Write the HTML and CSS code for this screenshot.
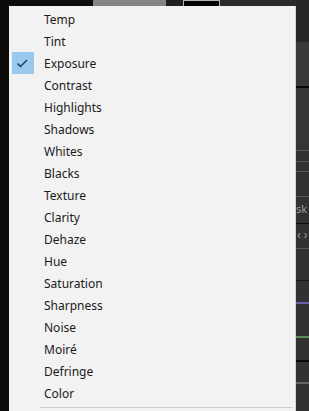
FILE: index.html
```html
<!DOCTYPE html>
<html>
  <head>
    <title>Adjustment menu</title>
    <link rel="stylesheet" href="styles.css">
  </head>
  <body>
    <div class="topbar">
      <div class="seg seg-dark"></div>
      <div class="seg seg-gray"></div>
      <div class="seg seg-mid"></div>
      <div class="seg seg-box"></div>
      <div class="seg seg-rest"></div>
    </div>
    <div class="main">
      <div class="left-strip"></div>
      <div class="menu">
        <ul class="items">
          <li class="item">Temp</li>
          <li class="item">Tint</li>
          <li class="item checked">
            <span class="check">
              <svg width="22" height="22" viewBox="0 0 22 22">
                <path d="M5.5 11.5 L8.5 14.5 L15 8" fill="none" stroke="#1c3553" stroke-width="1.4"/>
              </svg>
            </span>
            Exposure
          </li>
          <li class="item">Contrast</li>
          <li class="item">Highlights</li>
          <li class="item">Shadows</li>
          <li class="item">Whites</li>
          <li class="item">Blacks</li>
          <li class="item">Texture</li>
          <li class="item">Clarity</li>
          <li class="item">Dehaze</li>
          <li class="item">Hue</li>
          <li class="item">Saturation</li>
          <li class="item">Sharpness</li>
          <li class="item">Noise</li>
          <li class="item">Moiré</li>
          <li class="item">Defringe</li>
          <li class="item">Color</li>
        </ul>
        <div class="separator"></div>
      </div>
      <div class="side">
        <div class="band band-top"></div>
        <div class="band band-light"></div>
        <div class="band band-a"></div>
        <div class="band band-b"></div>
        <div class="band band-c"></div>
        <div class="band band-d"></div>
        <div class="band band-label">sk</div>
        <div class="band band-arrows">‹ ›</div>
        <div class="band band-e"></div>
        <div class="band band-purple"></div>
        <div class="band band-green"></div>
        <div class="band band-f"></div>
        <div class="band band-g"></div>
      </div>
    </div>
  </body>
</html>
```

FILE: styles.css
```css
body {
  margin: 0;
  width: 309px;
  height: 411px;
  overflow: hidden;
  background-color: #0e0c0a;
  font-family: "Noto Sans", "Open Sans", sans-serif;
}
.topbar {
  display: flex;
  height: 6px;
}
.seg-dark {
  width: 93px;
  background-color: #0e0c0a;
}
.seg-gray {
  width: 73px;
  background-color: #858585;
}
.seg-mid {
  width: 17px;
  background-color: #1f1f1f;
}
.seg-box {
  width: 35px;
  background-color: #050505;
  border: 1px solid #b5b5b5;
  border-bottom: none;
}
.seg-rest {
  flex: 1;
  background-color: #2a2a2a;
}
.main {
  display: flex;
  height: 405px;
}
.left-strip {
  width: 9px;
}
.menu {
  width: 286px;
  background-color: #f2f2f2;
  border-right: 1px solid #d4d4d4;
  padding-top: 3px;
}
.items {
  list-style: none;
  margin: 0;
  padding: 0;
}
.item {
  position: relative;
  height: 22px;
  line-height: 22px;
  padding-left: 35px;
  font-size: 12px;
  color: #1a1a1a;
}
.check {
  position: absolute;
  left: 3px;
  top: -1px;
  width: 22px;
  height: 22px;
  background-color: #99c9ef;
}
.check svg {
  display: block;
}
.separator {
  margin: 2px 2px 0 31px;
  height: 1px;
  background-color: #cfcfcf;
}
.side {
  flex: 1;
  display: flex;
  flex-direction: column;
  margin-top: -6px;
  background-color: #323232;
  overflow: hidden;
  white-space: nowrap;
}
.band {
  border-bottom: 1px solid #1a1a1a;
}
.band-top {
  height: 42px;
  background-color: #262626;
  border-bottom: none;
}
.band-light {
  height: 44px;
  background-color: #3a3a3a;
  border-bottom: 2px solid #0a0a0a;
}
.band-a {
  height: 62px;
  background-color: #353535;
  border-bottom: 1px solid #555;
}
.band-b {
  height: 10px;
  border-bottom: 1px solid #555;
}
.band-c {
  height: 9px;
  border-bottom: 1px solid #555;
}
.band-d {
  height: 24px;
  border-bottom: 1px solid #555;
}
.band-label {
  height: 26px;
  line-height: 24px;
  font-size: 11px;
  color: #9a9a9a;
  border-bottom: 1px solid #0d0d0d;
}
.band-arrows {
  height: 24px;
  line-height: 22px;
  font-size: 12px;
  color: #9a9a9a;
  text-indent: 1px;
  border-bottom: 1px solid #555;
}
.band-e {
  height: 31px;
}
.band-purple {
  height: 21px;
  border-bottom: 2px solid #6a62a8;
}
.band-green {
  height: 32px;
  border-bottom: 2px solid #5b8a5b;
}
.band-f {
  height: 22px;
  border-bottom: 2px solid #0a0a0a;
}
.band-g {
  height: 20px;
  border-bottom: 2px solid #666;
}
```
